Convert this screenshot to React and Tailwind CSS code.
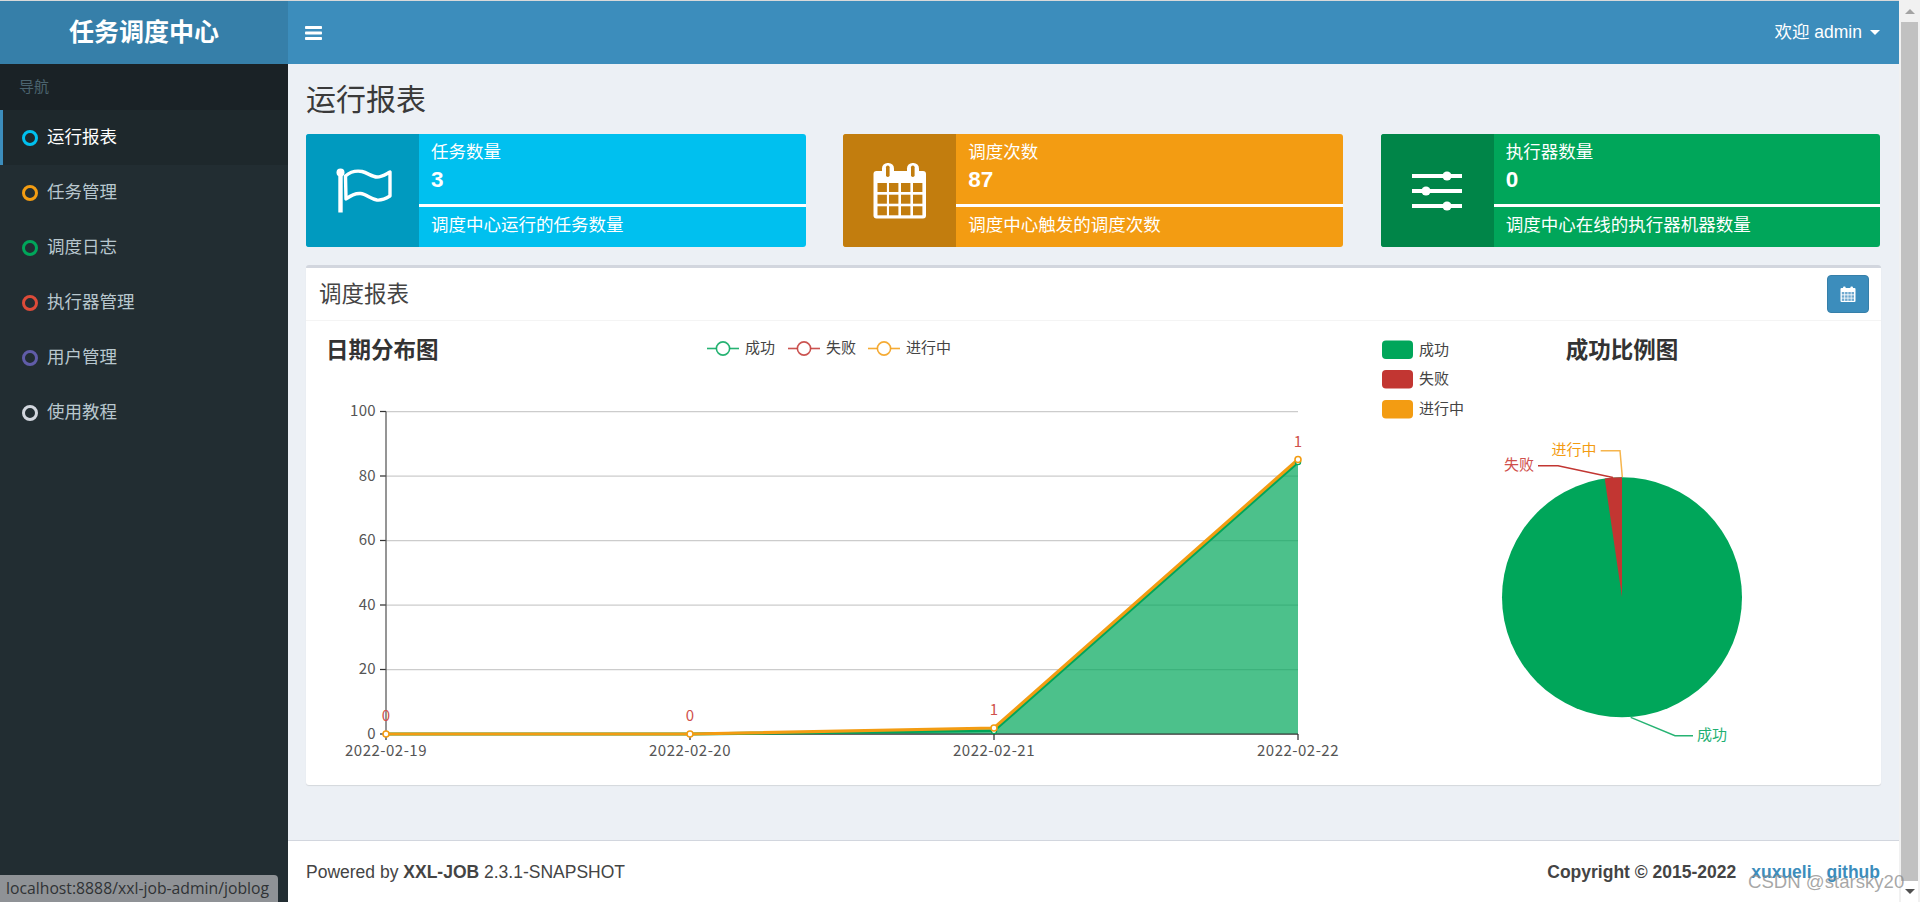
import React from 'react';

const chartFont = '"Noto Sans CJK SC", sans-serif';

const navItems = [
  { name: '运行报表', ring: 'border-[#00c0ef]', active: true },
  { name: '任务管理', ring: 'border-[#f39c12]' },
  { name: '调度日志', ring: 'border-[#00a65a]' },
  { name: '执行器管理', ring: 'border-[#dd4b39]' },
  { name: '用户管理', ring: 'border-[#605ca8]' },
  { name: '使用教程', ring: 'border-[#d2d6de]' },
];

const FlagIcon = () => (
  <svg width="60" height="60" viewBox="0 0 60 60" className="text-white">
    <circle cx="7.5" cy="11.5" r="4" fill="currentColor" />
    <rect x="5.3" y="11.5" width="4.4" height="40" fill="currentColor" />
    <path
      d="M12.5 15C17 11 23 9.5 29 10.5C35 12 39 16 44 16C49 16 53 13 57 11V35C52 38 48 39.5 44 39C38 38 33 33 27.5 32.5C22 32 17 35 13 38Z"
      fill="none"
      stroke="currentColor"
      strokeWidth="3.4"
      strokeLinejoin="round"
    />
  </svg>
);

const CalendarIcon = ({ bg }) => (
  <svg width="54" height="58" viewBox="0 0 54 58">
    <rect x="0.5" y="9" width="52.5" height="47.5" rx="3" fill="#fff" />
    <rect x="9" y="1" width="12" height="16" rx="5.5" fill="#fff" />
    <rect x="34" y="1" width="12" height="16" rx="5.5" fill="#fff" />
    <rect x="13" y="3.5" width="3.6" height="11.5" rx="1.8" fill={bg} />
    <rect x="38" y="3.5" width="3.6" height="11.5" rx="1.8" fill={bg} />
    {[21, 32.7, 44.3].map((y) =>
      [4.5, 16, 28, 40].map((x) => <rect key={`${x}-${y}`} x={x} y={y} width="9.4" height="9" fill={bg} />)
    )}
  </svg>
);

const SlidersIcon = () => (
  <svg width="50" height="40" viewBox="0 0 50 40" fill="#fff">
    <rect x="0" y="3" width="50" height="4" />
    <rect x="0" y="18" width="50" height="4" />
    <rect x="0" y="33" width="50" height="4" />
    <circle cx="35" cy="5" r="4.6" />
    <circle cx="14" cy="20" r="4.6" />
    <circle cx="35" cy="35" r="4.6" />
  </svg>
);

const SmallCalendar = () => (
  <svg width="16" height="16" viewBox="0 0 16 16">
    <rect x="0.5" y="2" width="15" height="14" rx="1" fill="#fff" />
    <rect x="3" y="0.5" width="2.6" height="4" rx="1" fill="#fff" />
    <rect x="10.4" y="0.5" width="2.6" height="4" rx="1" fill="#fff" />
    {[6, 9.3, 12.5].map((y) =>
      [1.8, 5.1, 8.3, 11.5].map((x) => <rect key={`${x}-${y}`} x={x} y={y} width="2.5" height="2.4" fill="#6fa9cf" />)
    )}
  </svg>
);

const StatBox = ({ bg, iconBg, icon, title, value, desc }) => (
  <div className={`flex flex-1 h-[113px] rounded-[3px] overflow-hidden text-white ${bg}`}>
    <div className={`w-[113px] flex items-center justify-center ${iconBg}`}>{icon}</div>
    <div className="flex-1 flex flex-col">
      <div className="px-[12px] pt-[6px] h-[70px]">
        <div className="text-[17.5px] leading-[25px]">{title}</div>
        <div className="text-[22.5px] leading-[29px] font-bold">{value}</div>
      </div>
      <div className="h-[2.5px] bg-white" />
      <div className="px-[12px] pt-[5px] text-[17.5px] leading-[26px]">{desc}</div>
    </div>
  </div>
);

const LegendItem = ({ x, color, label }) => (
  <g>
    <line x1={x} x2={x + 32} y1="348.5" y2="348.5" stroke={color} strokeWidth="1.6" strokeOpacity="0.85" />
    <circle cx={x + 16} cy="348.5" r="6.6" fill="#fff" stroke={color} strokeWidth="1.6" strokeOpacity="0.85" />
    <text x={x + 38} y="353" fontSize="15" fill="#444">{label}</text>
  </g>
);

const LineChart = () => {
  const xs = [386, 690, 994, 1298];
  const ys = [411.5, 476, 540.5, 605, 669.5, 734];
  return (
    <svg width="1074" height="464" viewBox="306 321 1074 464" style={{ fontFamily: chartFont }}>
      <text x="326" y="358" fontSize="22.5" fontWeight="700" fill="#333">日期分布图</text>
      <LegendItem x={707} color="#00a65a" label="成功" />
      <LegendItem x={788} color="#c23632" label="失败" />
      <LegendItem x={868} color="#f39c12" label="进行中" />

      {ys.slice(0, 5).map((y) => (
        <line key={y} x1="386" x2="1298" y1={y} y2={y} stroke="#ccc" strokeWidth="1.25" />
      ))}
      {ys.map((y, i) => (
        <g key={y}>
          <line x1="380" x2="386" y1={y} y2={y} stroke="#333" strokeWidth="1.25" />
          <text x="376" y={y + 4.5} fontSize="15" fill="#555" textAnchor="end" letterSpacing="0.3">{100 - i * 20}</text>
        </g>
      ))}

      <path d="M386 734L690 734L994 730.5L1298 462L1298 734Z" fill="#00a65a" fillOpacity="0.7" />
      <line x1="386" x2="386" y1="411.5" y2="734" stroke="#555" strokeWidth="1.25" />
      <line x1="386" x2="1298" y1="734" y2="734" stroke="#333" strokeWidth="1.25" />
      <path d="M386 734L690 734L994 730.5L1298 462" fill="none" stroke="#00a65a" strokeWidth="3.2" />
      <path d="M386 734L690 734L994 728L1298 459.5" fill="none" stroke="#f39c12" strokeWidth="3.2" />

      {xs.map((x) => (
        <g key={x}>
          <line x1={x} x2={x} y1="734" y2="740" stroke="#333" strokeWidth="1.25" />
          <text x={x} y="756" fontSize="15" fill="#555" textAnchor="middle" letterSpacing="0.5">
            {`2022-02-${19 + xs.indexOf(x)}`}
          </text>
        </g>
      ))}

      <circle cx="994" cy="731" r="2.6" fill="#fff" stroke="#00a65a" strokeWidth="1.25" />
      <circle cx="1298" cy="462" r="2.6" fill="#fff" stroke="#00a65a" strokeWidth="1.25" />
      {[[386, 734], [690, 734], [994, 728], [1298, 459.5]].map(([x, y]) => (
        <circle key={x} cx={x} cy={y} r="3" fill="#fff" stroke="#f39c12" strokeWidth="1.6" />
      ))}

      {[[386, 721, '0'], [690, 721, '0'], [994, 715, '1'], [1298, 447, '1']].map(([x, y, v]) => (
        <text key={x} x={x} y={y} fontSize="15" fill="#d0504c" textAnchor="middle">{v}</text>
      ))}
    </svg>
  );
};

const PieChart = () => (
  <svg width="500" height="464" viewBox="1380 321 500 464" style={{ fontFamily: chartFont }}>
    {[['成功', 349.5, '#00a65a'], ['失败', 379, '#c23632'], ['进行中', 409, '#f39c12']].map(([label, y, color]) => (
      <g key={label}>
        <rect x="1382" y={y - 9} width="31" height="18.5" rx="4" fill={color} />
        <text x="1419" y={y + 5} fontSize="15" fill="#444">{label}</text>
      </g>
    ))}
    <text x="1622" y="358" fontSize="22.5" fontWeight="700" fill="#333" textAnchor="middle">成功比例图</text>

    <circle cx="1622" cy="597.3" r="120" fill="#00a65a" />
    <path d="M1622 597.3L1604.7 478.6A120 120 0 0 1 1622 477.3Z" fill="#c23632" />

    <path d="M1600.7 450.7H1620L1622.3 477" fill="none" stroke="#f39c12" strokeOpacity="0.75" strokeWidth="1.5" />
    <path d="M1538 465.7H1558L1613 477.5" fill="none" stroke="#c23632" strokeWidth="1.4" />
    <path d="M1630.7 717.3L1675 735.7H1693" fill="none" stroke="#00a65a" strokeOpacity="0.85" strokeWidth="1.4" />

    <text x="1551.5" y="455" fontSize="15" fill="#f39c12">进行中</text>
    <text x="1504" y="470" fontSize="15" fill="#d0504c">失败</text>
    <text x="1697" y="740" fontSize="15" fill="#1fb072">成功</text>
  </svg>
);

export default function App() {
  return (
    <div
      className="relative flex w-[1920px] h-[902px] overflow-hidden bg-[#f1f1f1] text-[#333]"
      style={{ fontFamily: '"Liberation Sans", "Noto Sans CJK SC", sans-serif' }}
    >
      <div className="flex flex-col w-[1899px]">
        <div className="h-px bg-[#d9d9d9]" />
        <header className="flex h-[63px] text-white">
          <div className="w-[288px] bg-[#367fa9] flex items-center justify-center text-[25px] font-bold">任务调度中心</div>
          <div className="flex-1 bg-[#3c8dbc] flex items-center justify-between pl-[18px] pr-[19px]">
            <svg width="17" height="14" viewBox="0 0 17 14" fill="#fff" className="-ml-px">
              <rect y="0" width="17" height="3" rx="0.8" />
              <rect y="5.5" width="17" height="3" rx="0.8" />
              <rect y="11" width="17" height="3" rx="0.8" />
            </svg>
            <div className="flex items-center text-[17.5px]">
              <span>欢迎 admin</span>
              <span className="ml-[8px] w-0 h-0 border-x-[5px] border-x-transparent border-t-[5px] border-t-white" />
            </div>
          </div>
        </header>

        <div className="flex flex-1 min-h-0">
          <aside className="w-[288px] bg-[#222d32]">
            <div className="h-[46px] bg-[#1a2226] pl-[19px] flex items-center text-[15px] text-[#4b646f]">导航</div>
            {navItems.map((item) => (
              <div
                key={item.name}
                className={`h-[55px] flex items-center text-[17.5px] border-l-[3px] pl-[19px] ${
                  item.active ? 'bg-[#1e282c] border-[#3c8dbc] text-white' : 'border-transparent text-[#b8c7ce]'
                }`}
              >
                <span className={`w-4 h-4 rounded-full border-[3px] mr-[9px] ${item.ring}`} />
                {item.name}
              </div>
            ))}
          </aside>

          <main className="flex-1 flex flex-col bg-[#ecf0f5]">
            <div className="flex-1 pl-[18px] pr-[18.5px]">
              <h1 className="text-[30px] leading-[36px] pt-[18px] h-[70px] text-[#3a3a3a]">运行报表</h1>
              <div className="flex gap-[37.5px]">
                <StatBox bg="bg-[#00c0ef]" iconBg="bg-[#009abf]" icon={<FlagIcon />} title="任务数量" value="3" desc="调度中心运行的任务数量" />
                <StatBox bg="bg-[#f39c12]" iconBg="bg-[#c27d0e]" icon={<CalendarIcon bg="#c27d0e" />} title="调度次数" value="87" desc="调度中心触发的调度次数" />
                <StatBox bg="bg-[#00a65a]" iconBg="bg-[#008548]" icon={<SlidersIcon />} title="执行器数量" value="0" desc="调度中心在线的执行器机器数量" />
              </div>

              <section className="mt-[18px] h-[520px] bg-white rounded-[3px] border-t-[3px] border-[#d2d6de] shadow-[0_1px_1px_rgba(0,0,0,0.1)]">
                <div className="h-[53px] border-b border-[#f4f4f4] flex items-center justify-between pl-[13px] pr-[12px]">
                  <h3 className="text-[22.5px] text-[#444] pt-[2px]">调度报表</h3>
                  <button className="w-[42px] h-[38px] rounded-[4px] bg-[#3c8dbc] border border-[#367fa9] flex items-center justify-center">
                    <SmallCalendar />
                  </button>
                </div>
                <div className="flex">
                  <LineChart />
                  <PieChart />
                </div>
              </section>
            </div>

            <footer className="h-[62px] bg-white border-t border-[#d2d6de] flex items-center justify-between pl-[18px] pr-[19px] pt-[2px] text-[17.5px] text-[#444]">
              <div>
                Powered by <b>XXL-JOB</b> 2.3.1-SNAPSHOT
              </div>
              <div className="font-bold">
                Copyright © 2015-2022
                <span className="text-[#3c8dbc] ml-[15px]">xuxueli</span>
                <span className="text-[#3c8dbc] ml-[15px]">github</span>
              </div>
            </footer>
          </main>
        </div>
      </div>

      <div className="flex flex-col items-center w-[21px] pl-[2px] pr-[2px] bg-[#f1f1f1]">
        <div className="h-[22px] w-full flex items-center justify-center">
          <span className="w-0 h-0 border-x-[5px] border-x-transparent border-b-[5px] border-b-[#a3a3a3]" />
        </div>
        <div className="h-[859px] w-full bg-[#c1c1c1]" />
        <div className="h-[21px] w-full bg-white flex items-center justify-center">
          <span className="w-0 h-0 border-x-[5px] border-x-transparent border-t-[5px] border-t-[#505050]" />
        </div>
      </div>

      {/* browser status bubble and image watermark */}
      <div
        className="absolute left-0 bottom-0 w-[278px] h-[27px] bg-[#8f9296] rounded-tr-[4px] pl-[6px] text-[15.75px] leading-[27px] text-[#2f3235]"
        style={{ fontFamily: '"Open Sans", sans-serif' }}
      >
        localhost:8888/xxl-job-admin/joblog
      </div>
      <div className="absolute left-[1748px] top-[868px] text-[18.6px] leading-[28px] text-[#8a8a8a]/75 whitespace-nowrap">
        CSDN @starsky20
      </div>
    </div>
  );
}
